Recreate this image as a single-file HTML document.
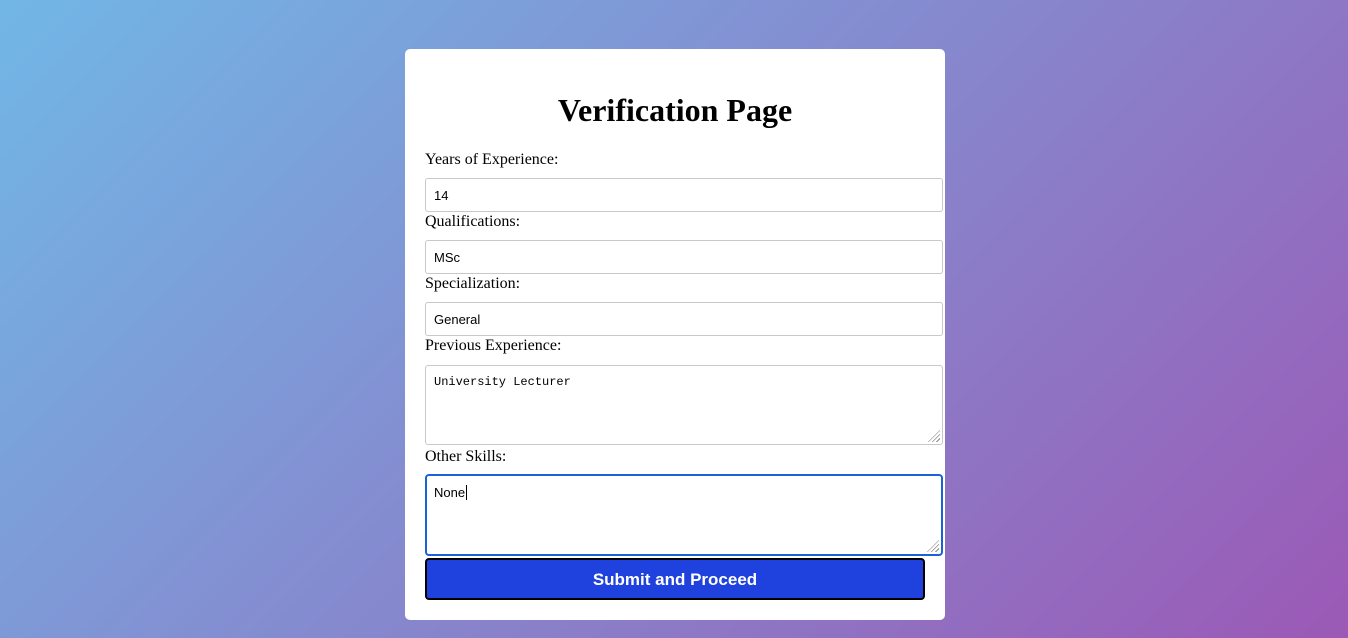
<!DOCTYPE html>
<html><head><style>
html,body{margin:0;height:638px;overflow:hidden}
body{background:linear-gradient(135deg,#71b7e6,#9b59b6);font-family:"Liberation Serif",serif;position:relative;width:1348px}
.card{position:absolute;left:405px;top:49px;width:540px;height:571px;background:#fff;border-radius:5px}
h1{position:absolute;left:0;width:540px;top:90px;margin:0;text-align:center;font-size:32px;font-weight:bold;line-height:40px}
.l{position:absolute;left:425px;font-size:16px;line-height:18px;color:#000}
.i{position:absolute;left:425px;width:518px;box-sizing:border-box;border:1px solid #c8c8c8;border-radius:3px;background:#fff;font-family:"Liberation Sans",sans-serif;font-size:13px;padding:0 8px;color:#000}
.t{font-family:"Liberation Mono","DejaVu Sans Mono",monospace;font-size:12px;padding:9px 8px}
.grip{position:absolute;right:2px;bottom:2px;width:12px;height:12px;background:repeating-linear-gradient(135deg,transparent 0 2px,#888 2px 3px);clip-path:polygon(100% 0,100% 100%,0 100%)}
.btn{position:absolute;left:425px;top:558px;width:500px;height:42px;box-sizing:border-box;background:#1f41dd;border:2px solid #000;border-radius:4px;color:#fff;font-family:"Liberation Sans",sans-serif;font-weight:bold;font-size:17px;text-align:center;line-height:39px}
</style></head><body>
<div class="card"></div>
<h1 style="left:405px">Verification Page</h1>
<div class="l" style="top:151px">Years of Experience:</div>
<div class="i" style="top:178px;height:34px;line-height:33px">14</div>
<div class="l" style="top:213px">Qualifications:</div>
<div class="i" style="top:240px;height:34px;line-height:33px">MSc</div>
<div class="l" style="top:275px">Specialization:</div>
<div class="i" style="top:302px;height:34px;line-height:33px">General</div>
<div class="l" style="top:337px">Previous Experience:</div>
<div class="i t" style="top:365px;height:80px">University Lecturer<div class="grip"></div></div>
<div class="l" style="top:448px">Other Skills:</div>
<div class="i" style="top:474px;height:82px;border:2px solid #1a63d6;border-radius:4px;padding:9px 7px;line-height:16px">None<span style="border-left:1px solid #000;margin-left:1px"></span><div class="grip"></div></div>
<div class="btn">Submit and Proceed</div>
</body></html>
